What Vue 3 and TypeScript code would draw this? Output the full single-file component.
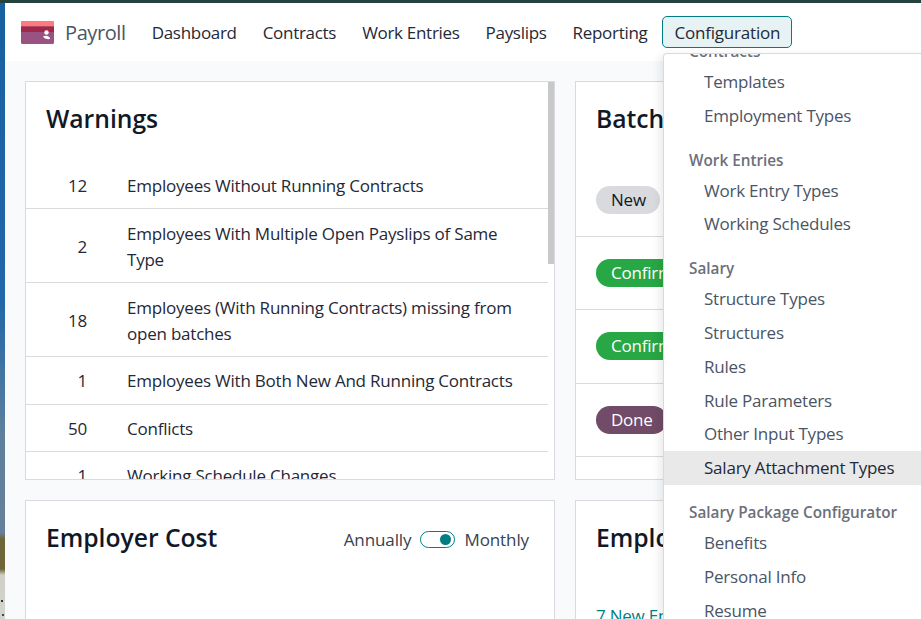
<script setup lang="ts">
interface Warning { count: number; text: string }
interface Batch { label: string; tone: string }
interface MenuGroup { title: string; items: string[] }

const navItems: string[] = ['Dashboard', 'Contracts', 'Work Entries', 'Payslips', 'Reporting']
const warnings: Warning[] = [
  { count: 12, text: 'Employees Without Running Contracts' },
  { count: 2, text: 'Employees With Multiple Open Payslips of Same Type' },
  { count: 18, text: 'Employees (With Running Contracts) missing from open batches' },
  { count: 1, text: 'Employees With Both New And Running Contracts' },
  { count: 50, text: 'Conflicts' },
  { count: 1, text: 'Working Schedule Changes' },
]
const batches: Batch[] = [
  { label: 'New', tone: 'new' },
  { label: 'Confirmed', tone: 'confirmed' },
  { label: 'Confirmed', tone: 'confirmed' },
  { label: 'Done', tone: 'done' },
]
const menu: MenuGroup[] = [
  { title: 'Contracts', items: ['Templates', 'Employment Types'] },
  { title: 'Work Entries', items: ['Work Entry Types', 'Working Schedules'] },
  { title: 'Salary', items: ['Structure Types', 'Structures', 'Rules', 'Rule Parameters', 'Other Input Types', 'Salary Attachment Types'] },
  { title: 'Salary Package Configurator', items: ['Benefits', 'Personal Info', 'Resume'] },
]
</script>

<template>
  <div class="screen">
    <div class="wallpaper"></div>
    <div class="app">
      <header class="navbar">
        <svg class="logo" width="33" height="23" viewBox="0 0 33 23">
          <rect x="0" y="0" width="33" height="23" rx="1.500" fill="#9a5283" />
          <path d="M0 1.500A1.500 1.500 0 0 1 1.500 0h30A1.500 1.500 0 0 1 33 1.500V5.500H0z" fill="#fb7b7f" />
          <rect x="0" y="5.500" width="33" height="5.500" fill="#a0284a" />
          <circle cx="25.500" cy="11.500" r="2.200" fill="#fff" />
          <path d="M22 15.500c2.500-1.500 5.500-.8 7 1.500.3.800-.3 1.300-1.200 1.200-2.500 0-5-1-5.800-2.700z" fill="#fff" />
        </svg>
        <span class="brand">Payroll</span>
        <nav class="nav">
          <a v-for="item in navItems" :key="item" class="nav-item">{{ item }}</a>
          <a class="nav-item active">Configuration</a>
        </nav>
      </header>
      <main class="content">
        <div class="grid">
          <section class="card warnings">
            <h2 class="title">Warnings</h2>
            <div class="rows">
              <div v-for="w in warnings" :key="w.text" class="row">
                <span class="count">{{ w.count }}</span>
                <span class="row-text">{{ w.text }}</span>
              </div>
            </div>
            <div class="scrollbar"></div>
          </section>
          <section class="card batches">
            <h2 class="title">Batches</h2>
            <div class="batch-rows">
              <div v-for="(b, i) in batches" :key="i" class="batch-row">
                <span class="pill" :class="b.tone">{{ b.label }}</span>
              </div>
            </div>
          </section>
          <section class="card cost">
            <div class="cost-head">
              <h2 class="title">Employer Cost</h2>
              <div class="toggle-wrap">
                <span>Annually</span>
                <span class="toggle"><span class="knob"></span></span>
                <span>Monthly</span>
              </div>
            </div>
          </section>
          <section class="card employees">
            <h2 class="title">Employees</h2>
            <a class="link">7 New Employees</a>
          </section>
        </div>
        <aside class="dropdown">
          <div class="dropdown-inner">
            <div v-for="g in menu" :key="g.title" class="group">
              <div class="group-title">{{ g.title }}</div>
              <div v-for="item in g.items" :key="item" class="menu-item" :class="{ hover: item === 'Salary Attachment Types' }">{{ item }}</div>
            </div>
          </div>
        </aside>
      </main>
    </div>
  </div>
</template>

<style>
html, body { margin: 0; height: 100%; overflow: hidden; background: #fff; }
</style>

<style scoped>
.screen {
  width: 921px;
  height: 619px;
  display: flex;
  overflow: hidden;
  font-family: "Open Sans", "Noto Sans", sans-serif;
  letter-spacing: -0.22px;
  color: #1f2937;
  background: #26423f;
  padding-top: 3px;
  box-sizing: border-box;
}
.wallpaper {
  width: 5px;
  flex: none;
  background:
    radial-gradient(circle at 2px 598px, #333 0 1px, transparent 1.500px),
    radial-gradient(circle at 3px 612px, #444 0 1px, transparent 1.500px),
    linear-gradient(180deg, #17609f 0, #2168a8 300px, #5d7f9d 430px, #66809a 530px, #6e6636 536px, #6e6636 566px, #cfcfc8 572px, #d5d5cf 616px);
}
.app { flex: 1; min-width: 0; display: flex; flex-direction: column; background: #f9fafb; }
.navbar {
  height: 58px;
  flex: none;
  background: #fff;
  display: flex;
  align-items: center;
  padding-left: 16px;
  box-sizing: border-box;
}
.logo { flex: none; margin-top: 1px; }
.brand { font-size: 20px; letter-spacing: -0.4px; color: #4a5565; margin-left: 11px; margin-right: 13px; }
.nav { display: flex; align-items: center; }
.nav-item { font-size: 17px; letter-spacing: -0.3px; color: #1f2937; padding: 1px 12px 0; line-height: 29px; border: 1px solid transparent; border-radius: 5px; }
.nav-item.active { letter-spacing: -0.2px; background: #e6f2f3; border-color: #017e84; padding: 1px 11px 0; margin-left: 2px; }
.content { position: relative; flex: 1; min-height: 0; padding: 20px 0 0 20px; }
.grid { display: grid; grid-template-columns: 530px 530px; grid-template-rows: 399px 300px; gap: 20px 20px; }
.card { position: relative; background: #fff; border: 1px solid #d8dadd; box-sizing: border-box; overflow: hidden; }
.title { margin: 0; font-size: 24.700px; letter-spacing: -0.03px; font-weight: 600; color: #111827; line-height: 32px; padding: 21px 20px 0; white-space: nowrap; }
.rows { margin-top: 27px; }
.row { display: flex; align-items: center; border-bottom: 1px solid #d8dadd; padding: 11.300px 0 8.900px; margin-right: 6px; }
.count { width: 61px; text-align: right; flex: none; font-size: 17px; line-height: 26.300px; }
.row-text { margin-left: 40px; font-size: 17px; line-height: 26.300px; max-width: 400px; }
.scrollbar { position: absolute; top: 0; right: 0; width: 6px; height: 182px; background: #c9c9c9; }
.batch-rows { margin-top: 28.500px; }
.batch-row { display: flex; align-items: center; height: 73.400px; border-bottom: 1px solid #d8dadd; padding-left: 20px; box-sizing: border-box; }
.pill { font-size: 17px; line-height: 28px; padding: 0 14.500px 0 15px; border-radius: 14px; }
.pill.new { background: #d8dadd; color: #111827; }
.pill.confirmed { background: #28a745; color: #fff; }
.pill.done { background: #714b67; color: #fff; }
.cost-head { display: flex; justify-content: space-between; align-items: flex-start; }
.toggle-wrap { display: flex; align-items: center; gap: 9px; font-size: 17px; letter-spacing: -0.1px; color: #374151; padding: 27px 25px 0 0; }
.toggle { width: 35px; height: 17px; border: 1px solid #017e84; border-radius: 9px; box-sizing: border-box; display: flex; align-items: center; justify-content: flex-end; padding-right: 3px; }
.knob { width: 11px; height: 11px; background: #017e84; border-radius: 50%; }
.link { display: block; margin: 50px 20px 0; font-size: 17px; color: #017e84; white-space: nowrap; }
.dropdown { position: absolute; left: 658px; top: -8px; width: 263px; height: 574px; background: #fff; border: 1px solid #d8dadd; border-right: 0; border-radius: 4px 0 0 0; box-sizing: border-box; box-shadow: -4px 2px 8px rgba(0,0,0,.08); overflow: hidden; }
.dropdown-inner { margin-top: -13px; }
.group { padding-bottom: 17px; }
.group-title { font-size: 15.300px; letter-spacing: 0; font-weight: 600; color: #6b6f7a; padding-left: 25px; line-height: 20px; margin-bottom: 4px; }
.menu-item { font-size: 17px; color: #4a5565; padding-left: 40px; line-height: 33.800px; white-space: nowrap; }
.menu-item.hover { background: #e9e9e9; color: #1f2937; }
</style>
